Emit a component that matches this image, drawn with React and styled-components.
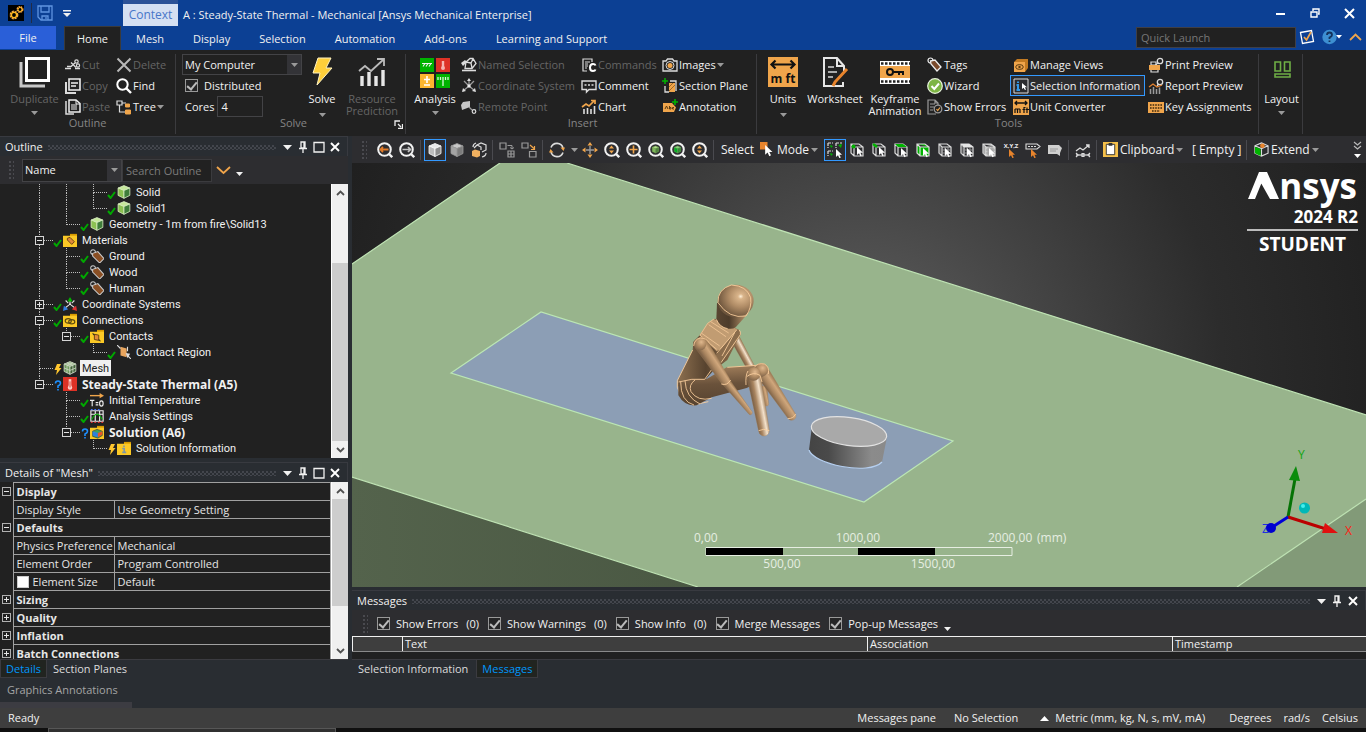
import React from "react";
import styled, { createGlobalStyle, css } from "styled-components";

const c = {
  blue: "#0c4094",
  file: "#2a5fd8",
  dark: "#212121",
  panel: "#2d2d30",
  chrome: "#292d32",
  status: "#3e3e3e",
  text: "#f1f1f1",
  dim: "#656565",
  orange: "#f0a54b",
  green: "#00b300",
  accent: "#3399ff",
};

const Global = createGlobalStyle`
  * { box-sizing: border-box; }
  html, body, #root { margin: 0; height: 100%; }
  body { background: ${c.chrome}; color: ${c.text}; font: 11px/14px "Open Sans", "Noto Sans", sans-serif; overflow: hidden; }
  button, input, select { font: inherit; color: inherit; margin: 0; }
  button { background: none; border: 0; padding: 0; }
  svg { display: block; flex: none; }
`;

/* ---------- shared ---------- */
const Svg = ({ s = 16, h = s, vb = "0 0 16 16", children }) => (
  <svg width={s} height={h} viewBox={vb} fill="none" aria-hidden="true">{children}</svg>
);
const Caret = ({ color = "#9a9a9a" }) => (
  <Svg s={7} h={4} vb="0 0 7 4"><path d="M0 0h7L3.5 4z" fill={color} /></Svg>
);
const W = "#dcdcdc";
const G = "#9a9a9a";
const O = c.orange;
const st = (color = W, w = 1.4) => ({ stroke: color, strokeWidth: w });

const CubeShape = ({ top = "#e8e8e8", left = "#bdbdbd", right = "#8e8e8e", line = "#fff" }) => (
  <g stroke={line} strokeWidth=".8" strokeLinejoin="round">
    <path d="M2 4l6-2.5L14 4 8 6.500z" fill={top} />
    <path d="M2 4l6 2.500v8L2 11.500z" fill={left} />
    <path d="M14 4L8 6.500v8l6-3z" fill={right} />
  </g>
);
const Lens = ({ children }) => (
  <>
    <circle cx="7.500" cy="7.500" r="6.300" {...st("#f2f2f2", 2)} />
    <path d="M12 12l3.200 3.200" {...st("#f2f2f2", 2.400)} />
    {children}
  </>
);
const Pointer = ({ x = 7, y = 5, fill = "#fff" }) => (
  <path transform={`translate(${x} ${y})`} d="M0 0v8l2-1.800 1.400 3 1.400-.7L3.400 5.700H6z" fill={fill} />
);
const BoxLine = ({ children, fill }) => (
  <>
    <path d="M2 2h8l4 3v9H5l-3-3zM2 2l3 3h9M5 5v9" {...st(W, 1.200)} fill={fill} />
    {children}
  </>
);
const Folder = ({ children }) => (
  <>
    <path d="M0 3h8V1h8v15H0z" fill="#fbc926" />
    <path d="M8 1h8v2H8z" fill="#d79a00" />
    {children}
  </>
);

const icons = {
  app: <><path d="M0 0h16v16H0z" fill="#000" /><circle cx="6" cy="10" r="3.400" stroke={O} strokeWidth="2" strokeDasharray="2 .7" /><circle cx="6" cy="10" r="2.600" {...st("#ffb71b", 1.400)} /><circle cx="12" cy="4.500" r="2.600" stroke={O} strokeWidth="1.800" strokeDasharray="1.500 .6" /><circle cx="12" cy="4.500" r="2" {...st("#ffb71b", 1)} /></>,
  save: <path d="M1 1h14v14H4l-3-3zM4 1v6h8V1M5 15v-4h6v4M9 12v2" {...st("#5f94e0", 1.300)} />,
  cut: <><path d="M0 11.500h6M10 11.500h5" {...st(W, 1.500)} /><path d="M2 9.500h4l4-3.500M6 5.500l5 5" {...st(W, 1.300)} /><circle cx="11.500" cy="4.500" r="1.700" {...st(W, 1.200)} /><circle cx="13" cy="8.500" r="1.600" {...st(W, 1.200)} /></>,
  copy: <><path d="M1 4v11h10" {...st(W, 2)} /><path d="M4 1h11v11H4z" fill="#212121" {...st("#eee", 1.600)} /><path d="M6 5h7M6 8h5" {...st("#eee", 1.500)} /></>,
  paste: <><path d="M1 2v13h8" {...st(W, 1.500)} /><path d="M4 1h7l4 3.500V13H4z" {...st("#eee", 1.500)} /><path d="M6 6h6M6 8h6M6 10h6M11 1v4h4" {...st("#eee", 1)} /></>,
  del: <path d="M1.500 1.500l13 13M14.500 1.500l-13 13" {...st("#b8b8b8", 2)} />,
  find: <><circle cx="6.500" cy="6.500" r="5.200" {...st("#fff", 2)} /><path d="M10 10l5 5" {...st("#fff", 2.400)} /></>,
  tree: <><path d="M1 2h5v4H1zM3.500 6v7H9M6 4h4" {...st(W, 1.200)} /><path d="M9.500 5h4v3h-4zM9.500 11h5v4h-5z" fill={O} stroke={O} /></>,
  namedSel: <><path d="M1 13.500h14" {...st(W, 1.600)} /><path d="M5 5l4-3.500h3l3 5-4 5H4zM5 5l5 1 1 5M10 6l2-4" {...st(W, 1.300)} /><path d="M0 6l4-3 2 2-4 4z" fill={W} /></>,
  coord: <><path d="M8 1v6M8 8l-6 5M8 8l6 5M3 3l4 4M13 3L9 7" {...st(G, 1.300)} /><path d="M8 0l2 3H6zM1 14l1-4 3 3zM15 14l-1-4-3 3z" fill={W} /><path d="M6.500 6.500h3v3h-3z" fill="#eee" /></>,
  remote: <><path d="M0 6l2-3 7-1v6l-8 3z" fill="#c6c6c6" /><path d="M8 8l3 3" {...st(G, 1.300)} /><circle cx="13" cy="12.500" r="1.800" {...st(W, 1.200)} /></>,
  commands: <><path d="M6 14H2V2h9v3M4 5h5M4 7h3M4 9h3M4 11h2" {...st(W, 1.200)} /><path d="M14.500 8.500Q14 7 12 7 9 7 9 10.500T12 14q2 0 2.500-1.500" {...st("#fff", 2)} /></>,
  comment: <><path d="M1 3h14v8.500H8L5.500 14v-2.500H1z" {...st(W, 1.400)} /><path d="M3.500 7h2M7 7h2M10.500 7h2" {...st(W, 1.400)} /></>,
  chart: <><path d="M1 8l4-3 3 2 5-5M10 1.500h4V5" {...st(O, 1.700)} /><path d="M3 10v5M6.500 9v6M10 10v5M13.500 7v8" {...st(W, 1.600)} /></>,
  images: <><path d="M1 4h3l1.500-2h5L12 4h3v10H1z" {...st(W, 1.300)} /><circle cx="8" cy="8.500" r="4" {...st(W, 1)} /><circle cx="8" cy="8.500" r="2.500" fill={O} /></>,
  section: <><path d="M3 0v6M0 3h6" {...st(c.green, 1.500)} /><path d="M3 8v6h4M8 3h6v10" {...st(W, 1.300)} /><path d="M7 5h6v9H7z" fill={O} /><path d="M7 9l4-4M7 13l6-6" {...st("#8a5a20", .8)} /></>,
  annot: <><path d="M1 4h9l4 4.500L12 13H1z" fill={O} /><path d="M3 10l1.500-3L6 10M7.500 7v3H9V8.500H7.500M12 8.500h-1.500V10H12" {...st("#5b3b10", 1)} /><path d="M13 0v6M10 3h6" {...st(c.green, 1.600)} /></>,
  tags: <><circle cx="3.500" cy="3.500" r="2.500" {...st("#eee", 1.200)} /><path d="M3.500 4l4.500-1 6 7-4 4-6-7z" {...st("#eee", 1.300)} fill="#7a4a2c" /></>,
  wizard: <><circle cx="8" cy="8" r="7.300" fill="#7db544" stroke="#e8f3dc" strokeWidth="1.200" /><path d="M4.500 8l2.800 3L12 5.500" {...st("#fff", 2)} /></>,
  errors: <><path d="M9 15H1V1h7l3 3v2M3 5h5M3 8h4M3 11h3M8 1v3h3" {...st(G, 1.200)} /><circle cx="11" cy="10" r="3.800" stroke={G} strokeWidth="1.300" /><path d="M9.500 10l1.200 1.500L13 8.500" {...st(O, 1.200)} /></>,
  views: <><path d="M1 5l3-3h11l-3 3zM12 5l3-3v9l-3 4z" fill="#c27a22" /><path d="M1 5h11v10H1z" fill={O} /><ellipse cx="6.500" cy="10" rx="3.800" ry="2.400" {...st("#5b3b10", 1)} /><circle cx="6.500" cy="10" r="1.200" fill="#5b3b10" /></>,
  selInfo: <><path d="M1 1h14v14H1z" {...st(W, 1)} /><path d="M5 3.500v1.600M3.500 7H5v5M3.500 12h3.500" {...st("#3399e8", 2)} /><path d="M9 5v6l1.500-1.300L12 12l1-.6-1.200-2.200H14z" fill="#fff" /></>,
  unit: <><path d="M0 0h16v16H0z" fill={O} /><path d="M2 4h12M4 2L2 4l2 2M12 2l2 2-2 2" {...st("#111", 1.300)} /><path d="M2 14v-4M4.500 14v-4M7 14v-4M2 10h5M11 14V8.500h1.500M9.500 10.500h3M14 8.500V14M13 10.500h3" {...st("#111", 1.200)} /></>,
  print: <><circle cx="12" cy="4" r="2.700" {...st(W, 1.300)} /><path d="M10 6L7.500 8" {...st(W, 1.300)} /><path d="M3 5h5v3H3zM3 12h7v3H3z" {...st(W, 1.200)} /><path d="M1 8h11v5H1z" fill={O} /></>,
  report: <><circle cx="12" cy="4" r="2.700" {...st(W, 1.300)} /><path d="M10.500 6L9 8" {...st(W, 1.300)} /><path d="M1 9l4-3 4 3 5-2" {...st("#e08030", 1.300)} /><path d="M2.500 11v5M5.500 9v7M8.500 11v5M11.500 9.500V16" {...st(G, 1.500)} /></>,
  keys: <><path d="M0 3h16v11H0z" fill={O} /><path d="M2 6h12M2 9h12M4 12h8" stroke="#3c270c" strokeWidth="1.500" strokeDasharray="1.600 1" /></>,
};
const Icon = ({ name, size = 16 }) => <Svg s={size}>{icons[name]}</Svg>;

/* ---------- title bar and ribbon tabs ---------- */
const Window = styled.div`display: flex; flex-direction: column; height: 100%; min-width: 1310px;`;
const TitleBar = styled.header`display: flex; align-items: center; height: 26px; padding-left: 8px; background: ${c.blue};`;
const QuickTools = styled.div`
  display: flex; align-items: center; width: 115px; gap: 10px; height: 22px;
  > i { width: 1px; height: 20px; margin: 0 -5px 0 -3px; background: #222b45; }
`;
const ContextTab = styled.div`width: 55px; height: 26px; border-top: 4px solid #2c5297; background: #d5e0f2; color: #4877c9; text-align: center; line-height: 22px; font-size: 12px;`;
const Title = styled.h1`margin: 3px 0 0 5px; font: inherit; flex: 1;`;
const WindowButtons = styled.div`display: flex; button { width: 34px; height: 26px; display: grid; place-items: center; }`;
const TabBar = styled.nav`display: flex; height: 24px; background: ${c.blue};`;
const Tab = styled.button`
  padding: 2px 15px 0 14px;
  ${(p) => p.$kind === "file" && css`width: 56px; height: 23px; padding: 0; background: ${c.file}; margin-right: 8px;`}
  ${(p) => p.$kind === "active" && css`width: 57px; margin-right: 1px; padding: 0; background: ${c.dark}; border: 1px solid #3a3a3a; border-bottom: 0;`}
`;
const QuickLaunch = styled.input`
  margin: 1px 3px 2px auto; width: 160px; padding: 0 4px; background: ${c.dark}; border: 1px solid #3f3f46;
  &::placeholder { color: #777; opacity: 1; }
`;
const TabTools = styled.div`display: flex; align-items: center; gap: 7px; padding: 0 4px 2px 0;`;

/* ---------- ribbon ---------- */
const Ribbon = styled.div`display: flex; height: 86px; padding: 4px 0 2px; background: ${c.dark};`;
const Group = styled.section`
  display: grid; grid-template-rows: 63px 12px; width: ${(p) => p.$w}px; border-right: 1px solid #3b3b3e; padding-left: ${(p) => p.$pad || 0}px; align-content: start;
`;
const Parts = styled.div`display: grid; grid-template-columns: ${(p) => p.$cols};`;
const Stack = styled.div`display: grid; grid-template-rows: repeat(3, 21px);`;
const GroupLabel = styled.div`
  display: grid; grid-template-columns: 1fr auto 1fr; color: #858585; line-height: 12px;
  button { justify-self: end; align-self: end; margin-right: 2px; }
`;
const Small = styled.button`
  display: flex; align-items: center; gap: 1px; height: 21px; white-space: nowrap; color: ${(p) => (p.disabled ? c.dim : c.text)};
  ${(p) => p.$on && css`border: 1px solid ${c.accent}; background: #2b2b2e; width: 135px;`}
  ${(p) => p.$inset && css`padding-left: ${p.$on ? 2 : 3}px;`}
`;
const BigBtn = styled.button`
  display: flex; flex-direction: column; align-items: center; padding: 2px 0 2px ${(p) => p.$shift || 0}px; line-height: 12px; white-space: nowrap;
  color: ${(p) => (p.disabled ? c.dim : c.text)};
  > span { margin-top: 5px; text-align: center; }
  > svg + span + svg { margin-top: auto; }
`;
const Picker = styled.div`
  display: flex; align-items: center; background: ${c.dark}; border: 1px solid #434346; height: ${(p) => p.$h || 21}px; width: ${(p) => p.$w}px;
  select { appearance: none; flex: 1; min-width: 0; background: none; border: 0; padding: 0 2px; height: 100%; outline: 0; }
  > span { width: 14px; height: 100%; display: grid; place-items: center; background: #333337; }
`;
const CheckLabel = styled.label`display: flex; align-items: center; gap: 6px; padding-left: ${(p) => p.$inset || 0}px; white-space: nowrap;`;
const Check = styled.input.attrs({ type: "checkbox", defaultChecked: true })`
  appearance: none; width: 13px; height: 13px; border: 1px solid #999; background: #252526; display: grid; place-items: center;
  &:checked::before { content: ""; width: 4px; height: 8px; border: solid #bbb; border-width: 0 2px 2px 0; transform: rotate(40deg); margin-top: -2px; }
`;
const CoresLabel = styled.label`
  display: flex; align-items: center; padding-left: 3px;
  input { margin-left: 3px; width: 46px; height: 21px; background: ${c.dark}; border: 1px solid #434346; padding: 0 3px; }
`;

const S = ({ icon, children, ...p }) => <Small {...p}><Icon name={icon} /><span>{children}</span>{p.$caret && <Caret />}</Small>;
const Big = ({ icon, lines, caret, ...p }) => (
  <BigBtn {...p}>
    <Svg s={32} vb="0 0 32 32">{icon}</Svg>
    <span>{lines.map((l) => <React.Fragment key={l}>{l}<br /></React.Fragment>)}</span>
    {caret && <Caret />}
  </BigBtn>
);

const bigIcons = {
  duplicate: <><path d="M2 6v24h24" {...st("#c8c8c8", 3)} /><path d="M7.500 2.500h22v22h-22z" {...st("#fff", 3)} /></>,
  solve: <path d="M12 2h13l-5 10h6L11 29l3-12H7z" fill="#ffcf3a" stroke="#fff2c0" strokeWidth="1" />,
  resource: <><path d="M3 15l6-5 6 5L27 4M21 3h7v7" {...st("#bbb", 1.800)} /><path d="M6 20v10M13 16v14M20 20v10M27 14v16" {...st("#e6e6e6", 3.400)} /></>,
  analysis: <>
    <path d="M1 2h14v14H1z" fill={c.green} /><path d="M17 2h14v14H17z" fill="#de3226" /><path d="M1 18h14v14H1z" fill="#fbb62f" /><path d="M17 18h14v14H17z" fill={c.green} />
    <path d="M3 7.500h10M4 10.500l2-3M7 10.500l2-3M10 10.500l2-3" {...st("#eee", 1.100)} /><path d="M24 5v6" {...st("#f5b5b0", 2.400)} /><circle cx="24" cy="12" r="2" fill="#f5b5b0" />
    <path d="M8 20v7M5 23.500h6M5 29h6" {...st("#fff", 1.600)} /><path d="M19 21v3M21.500 21v3M24 21v9M26.500 21v3M29 21v3" {...st("#d8f5d8", 1.300)} />
  </>,
  units: <><path d="M1 1h30v30H1z" fill="#f0a54b" /><path d="M5 8.500h22M8.500 4.500l-4 4 4 4M23.500 4.500l4 4-4 4" {...st("#111", 2.200)} />
    <text x="16" y="27" textAnchor="middle" fontSize="12" fontWeight="700" fontFamily="Open Sans, sans-serif" fill="#111">m ft</text></>,
  worksheet: <><path d="M25 15v-5l-7-8H5v28h19v-4M18 2v8h7" {...st("#e6e6e6", 2)} /><path d="M9 11h6M9 16h9M9 21h5" {...st("#aaa", 2)} /><path d="M28 13l-12 13-2 4" {...st("#e8842c", 3)} /></>,
  keyframe: <><path d="M1 5h30v23H1z" fill="#fff" /><path d="M1 10h30v12H1z" fill="#f0a54b" /><path d="M2 7.500h29M2 25.500h29" stroke="#222" strokeWidth="2.600" strokeDasharray="2.500 1.500" /><circle cx="11" cy="16" r="3" {...st("#111", 2)} /><path d="M14 16h11M20 16v3M24 16v3" {...st("#111", 2)} /></>,
  layout: <path d="M9 6h5.500v9H9zM18.500 6H24v9h-5.500zM9 18h15v3H9z" {...st("#6fae45", 1.600)} />,
};

function RibbonBar() {
  return (
    <Ribbon>
      <Group $w={176}>
        <Parts $cols="65px 51px 1fr">
          <Big disabled $shift={4} icon={bigIcons.duplicate} lines={["Duplicate"]} caret />
          <Stack><S disabled icon="cut">Cut</S><S disabled icon="copy">Copy</S><S disabled icon="paste">Paste</S></Stack>
          <Stack><S disabled icon="del">Delete</S><S icon="find">Find</S><S icon="tree" $caret>Tree</S></Stack>
        </Parts>
        <GroupLabel><span /><span>Outline</span></GroupLabel>
      </Group>
      <Group $w={230} $pad={6}>
        <Parts $cols="120px 40px 60px">
          <Stack>
            <Picker $w={120}><select aria-label="Solve on" defaultValue="My Computer"><option>My Computer</option></select><span><Caret /></span></Picker>
            <CheckLabel $inset={3}><Check /> Distributed</CheckLabel>
            <CoresLabel>Cores<input defaultValue="4" /></CoresLabel>
          </Stack>
          <Big icon={bigIcons.solve} lines={["Solve"]} caret />
          <Big disabled icon={bigIcons.resource} lines={["Resource", "Prediction"]} />
        </Parts>
        <GroupLabel><span /><span>Solve</span><button aria-label="Solve options"><Svg s={9} vb="0 0 9 9"><path d="M1 6V1h5M4 4l3 3M8.500 4v4.500H4" {...st("#eee", 1.300)} /></Svg></button></GroupLabel>
      </Group>
      <Group $w={351} $pad={3}>
        <Parts $cols="52px 120px 81px 1fr">
          <Big icon={bigIcons.analysis} lines={["Analysis"]} caret />
          <Stack><S disabled icon="namedSel">Named Selection</S><S disabled icon="coord">Coordinate System</S><S disabled icon="remote">Remote Point</S></Stack>
          <Stack><S disabled icon="commands">Commands</S><S icon="comment">Comment</S><S icon="chart">Chart</S></Stack>
          <Stack><S icon="images" $caret>Images</S><S icon="section">Section Plane</S><S icon="annot">Annotation</S></Stack>
        </Parts>
        <GroupLabel><span /><span>Insert</span></GroupLabel>
      </Group>
      <Group $w={502} $pad={2}>
        <Parts $cols="48px 56px 64px 83px 138px 1fr">
          <Big icon={bigIcons.units} lines={["Units"]} caret />
          <Big icon={bigIcons.worksheet} lines={["Worksheet"]} />
          <Big icon={bigIcons.keyframe} lines={["Keyframe", "Animation"]} />
          <Stack><S icon="tags">Tags</S><S icon="wizard">Wizard</S><S icon="errors">Show Errors</S></Stack>
          <Stack><S $inset icon="views">Manage Views</S><S $inset $on icon="selInfo">Selection Information</S><S $inset icon="unit">Unit Converter</S></Stack>
          <Stack><S icon="print">Print Preview</S><S icon="report">Report Preview</S><S icon="keys">Key Assignments</S></Stack>
        </Parts>
        <GroupLabel><span /><span>Tools</span></GroupLabel>
      </Group>
      <Group $w={44} $pad={2}>
        <Parts $cols="1fr"><Big icon={bigIcons.layout} lines={["Layout"]} caret /></Parts>
      </Group>
    </Ribbon>
  );
}

/* ---------- dock panels ---------- */
const Body = styled.main`display: flex; flex: 1; min-height: 0; gap: 4px; background: ${c.chrome};`;
const Left = styled.div`width: 348px; flex: none; display: flex; flex-direction: column; min-height: 0;`;
const Right = styled.div`flex: 1; min-width: 0; display: flex; flex-direction: column; min-height: 0;`;
const Panel = styled.section`
  display: flex; flex-direction: column; min-height: 0; flex: ${(p) => p.$flex || "none"};
  margin: ${(p) => p.$above || 0}px 0 ${(p) => p.$below || 0}px;
`;
const PanelHead = styled.header`
  display: flex; align-items: center; gap: 5px; flex: none; height: 20px; padding: 1px 6px 0 5px; background: ${c.chrome}; border: 1px solid #383a40; border-width: 1px 1px 0 0;
  h2 { font: inherit; margin: 0; }
  > i { flex: 1; height: 5px; background: radial-gradient(circle at 1px 1px, #43464d 1px, transparent 1px) 0 0 / 4px 4px, radial-gradient(circle at 1px 1px, #43464d 1px, transparent 1px) 2px 2px / 4px 4px; }
  button { display: grid; place-items: center; width: 12px; height: 14px; }
  div { display: flex; gap: 4px; }
`;
const Grip = styled.i`width: 5px; height: 18px; background: radial-gradient(circle at 1px 1px, #4a4a4f 1px, transparent 1px) 0 0 / 4px 4px;`;
const OutlineBar = styled.div`
  display: flex; align-items: center; flex: none; height: 28px; padding-left: 9px; background: ${c.panel};
  ${Grip} { margin-right: 8px; }
  input { width: 90px; height: 23px; margin: 0 4px 0 0; padding: 0 3px; background: ${c.dark}; border: 1px solid #3b3b3e; }
  input::placeholder { color: #7b7b7b; opacity: 1; }
  > button:last-child { margin: 8px 0 0 5px; }
`;
const Split = styled.div`display: flex; flex: ${(p) => p.$flex || 1}; min-height: 0; background: ${c.dark};`;

const PanelHeader = ({ title, max }) => (
  <PanelHead>
    <h2>{title}</h2><i />
    <div>
      <button aria-label="Window position"><Svg s={9} h={5} vb="0 0 9 5"><path d="M0 0h9L4.500 5z" fill="#f1f1f1" /></Svg></button>
      <button aria-label="Auto hide"><Svg s={10} h={12} vb="0 0 10 12"><path d="M3 1h4v6H3zM6 1v6M1 7.500h8M5 8v4" {...st("#f1f1f1", 1.300)} /></Svg></button>
      {max && <button aria-label="Maximize"><Svg s={12} vb="0 0 12 12"><path d="M1 1.500h10v9.500H1z" {...st("#f1f1f1", 1.300)} /></Svg></button>}
      <button aria-label="Close"><Svg s={10} vb="0 0 10 10"><path d="M1 1l8 8M9 1L1 9" {...st("#fff", 1.900)} /></Svg></button>
    </div>
  </PanelHead>
);

const ScrollTrack = styled.div`
  width: 17px; flex: none; background: #f0f0f0; display: flex; flex-direction: column; border-left: 1px solid #fff;
  button { height: 17px; display: grid; place-items: center; flex: none; }
  > div { flex: ${(p) => p.$thumb}; background: #cdcdcd; }
  > i { flex: ${(p) => p.$before}; }
  > b { flex: ${(p) => p.$after}; }
`;
const Scroll = (p) => (
  <ScrollTrack {...p}>
    <button aria-label="Scroll up"><Svg s={9} h={6} vb="0 0 9 6"><path d="M1 5l3.500-3.500L8 5" {...st("#505050", 1.800)} /></Svg></button>
    <i /><div /><b />
    <button aria-label="Scroll down"><Svg s={9} h={6} vb="0 0 9 6"><path d="M1 1l3.500 3.500L8 1" {...st("#505050", 1.800)} /></Svg></button>
  </ScrollTrack>
);

/* ---------- outline tree ---------- */
const Tree = styled.ul`list-style: none; margin: 0; padding: 0 0 0 26px; flex: 1; overflow: hidden; font-family: Roboto, sans-serif;`;
const TreeRow = styled.li`display: flex; align-items: center; height: 16px; white-space: nowrap;`;
const Guide = styled.span`
  display: grid; grid-template: 9px 7px / 13px 14px; width: 27px; height: 16px; flex: none;
  > i { grid-column: 2; border: 0 dotted #bdbdbd; }
  > i:nth-of-type(1) { grid-row: 1; border-left-width: ${(p) => (p.$k === "b" ? 0 : 1)}px; border-bottom-width: ${(p) => (p.$k === "t" || p.$k === "l" ? 1 : 0)}px; }
  > i:nth-of-type(2) { grid-row: 2; border-left-width: ${(p) => (p.$k === "v" || p.$k === "t" ? 1 : 0)}px; }
  > button { grid-area: 1 / 1 / -1 / -1; width: 9px; height: 9px; margin: 4px 0 0 9px; border: 1px solid #d5d5d5; background: ${c.dark}; display: grid; place-items: center; }
`;
const TreeText = styled.span`
  padding: 1px 2px 0; margin-left: 3px; line-height: 15px;
  ${(p) => p.$bold && css`font: 700 12px/15px "Open Sans", sans-serif;`}
  ${(p) => p.$sel && css`background: #f0f0f0; color: #222;`}
`;
const PlusMinus = ({ open }) => <Svg s={7} vb="0 0 7 7"><path d={open ? "M1 3.500h5" : "M1 3.500h5M3.500 1v5"} stroke="#e5e5e5" /></Svg>;

const statusIcons = {
  ok: <path d="M1 8l2.500 3L8 5" {...st("#00a800", 2)} />,
  bolt: <path d="M4 1h4L6 5h2.500L3 12l1-5H1.500z" fill="#ffc62e" />,
  q: <path d="M2.500 4.500Q2.500 2 5 2t2.500 2.300Q7.500 6 5 7v2M5 10v1.500" {...st("#1e90ff", 1.600)} />,
};
const nodeIcons = {
  solid: <g transform="translate(-1 -1) scale(1.120)"><CubeShape top="#c5e89a" left="#8cc152" right="#3f7d3a" line="#dff2c8" /></g>,
  materials: <Folder><path d="M5 6l3-1 5 5-3 3-5-5z" fill="#e08a3a" stroke="#5a3a10" /></Folder>,
  material: <><circle cx="3.500" cy="3.500" r="2.700" {...st("#ccc", 1.200)} /><path d="M3 5l6-2 7 8-5 5-8-8z" fill="#8a4f24" {...st("#ccc", 1.200)} /></>,
  csys: <><path d="M8 2v5M3 12l4-3M13 12L9 9M3 4l3 3M13 4l-3 3" {...st("#ddd", 1.300)} /><path d="M8 0l3 5H5z" fill="#00b300" /><path d="M0 16l1-6 5 4z" fill="#2f7fe0" /><path d="M16 16l-1-6-5 4z" fill="#e03030" /><path d="M7 7h2v2H7z" fill="#fff" /></>,
  connections: <Folder><ellipse cx="6" cy="9" rx="3.500" ry="2.500" {...st("#5a4a10", 1.300)} /><ellipse cx="10" cy="10" rx="3.500" ry="2.500" {...st("#5a4a10", 1.300)} /></Folder>,
  contacts: <Folder><path d="M5 6l5 1v6l-5-1z" fill="#e08a3a" stroke="#5a3a10" /><path d="M3 5l2 2M12 14l-2-2" {...st("#222", 1.200)} /></Folder>,
  region: <><path d="M4 2l7 2v10l-7-2z" fill="#e8a55e" /><path d="M0 0l4 4M16 16l-5-5M12 2v5" {...st("#ddd", 1.300)} /><path d="M10 9l5 1-3 5z" fill="#ddd" /></>,
  mesh: <g transform="translate(-1 -1) scale(1.120)"><CubeShape top="#9bb98a" left="#6f9a5c" right="#42633a" line="#d2dccb" /><path d="M5 2.800l6 2.500v8M11 2.800L5 5.300v8M2 8l6 2.500L14 8" {...st("#d2dccb", .8)} /></g>,
  thermal: <><path d="M0 0h16v16H0z" fill="#de3226" /><path d="M8 2.500v8" {...st("#ffd0cc", 3)} /><circle cx="8" cy="12" r="2.500" fill="#ffd0cc" /><path d="M8 5v7" {...st("#de3226", 1)} /></>,
  initial: <><path d="M0 3h12" {...st(O, 1.600)} /><path d="M11 0l5 3-5 3z" fill={O} /><path d="M0 8.500h5M2.500 8.500V15M6.500 11h3M6.500 13.500h3" {...st("#eee", 1.300)} /><ellipse cx="13" cy="12" rx="2" ry="3" {...st("#eee", 1.300)} /></>,
  settings: <><path d="M1 2h14v12H1zM6 2v12M11 2v12M1 6h14" {...st("#eee", 1.300)} /><path d="M2 12Q8 0 14 12" {...st("#00b300", 1.400)} /><path d="M1 .8h12" stroke="#4070ff" strokeWidth="1.500" strokeDasharray="2 2" /><path d="M1 15.300h14" stroke="#e03030" strokeWidth="1.400" strokeDasharray="2 2" /></>,
  solution: <Folder><path d="M3 7l5-2 6 2v5l-5 3-6-2z" fill="#3da35d" stroke="#333" strokeWidth=".7" /><path d="M3 7l6 2v5l-6-2z" fill="#2f7fe0" /><path d="M9 9l5-2v4l-5 3z" fill="#e8552a" /></Folder>,
  info: <Folder><path d="M8 5v1.800M6 8.500h2.200V13M6 13h4.500" {...st("#7d96a8", 1.800)} /></Folder>,
};
const treeRows = [
  ["vvt", "ok", "solid", "Solid"],
  ["vvl", "ok", "solid", "Solid1"],
  ["vl", "ok", "solid", "Geometry - 1m from fire\\Solid13"],
  ["t", "ok", "materials", "Materials", "-"],
  ["vt", "ok", "material", "Ground"],
  ["vt", "ok", "material", "Wood"],
  ["vl", "ok", "material", "Human"],
  ["t", "ok", "csys", "Coordinate Systems", "+"],
  ["t", "ok", "connections", "Connections", "-"],
  ["vl", "ok", "contacts", "Contacts", "-"],
  ["vbl", "ok", "region", "Contact Region"],
  ["t", "bolt", "mesh", "Mesh", "", "sel"],
  ["l", "q", "thermal", "Steady-State Thermal (A5)", "-", "bold"],
  ["bt", "ok", "initial", "Initial Temperature"],
  ["bt", "ok", "settings", "Analysis Settings"],
  ["bl", "q", "solution", "Solution (A6)", "-", "bold"],
  ["bbl", "bolt", "info", "Solution Information"],
];

/* ---------- details ---------- */
const DetailsTable = styled.table`
  border-collapse: collapse; table-layout: fixed; width: 100%;
  td, th { height: 18px; padding: 0 0 0 3px; border: 1px solid #a0a0a0; text-align: left; white-space: nowrap; font-weight: 400; line-height: 14px; color: #e6e6e6; }
  th[colspan] { font-weight: 700; }
  td:first-child { border-left: 0; border-top: 0; border-bottom: 0; padding: 0 0 0 2px; }
  td button { display: grid; place-items: center; width: 9px; height: 9px; border: 1px solid #b0b0b0; }
  label { display: flex; align-items: center; gap: 4px; }
`;
const PlainCheck = styled.input.attrs({ type: "checkbox" })`appearance: none; width: 12px; height: 12px; background: #fff; border: 1px solid #ccc;`;
const Clip = styled.div`flex: 1; min-width: 0; overflow: hidden;`;
const detailRows = [
  ["-", "Display"], ["", "Display Style", "Use Geometry Setting"], ["-", "Defaults"],
  ["", "Physics Preference", "Mechanical"], ["", "Element Order", "Program Controlled"], ["", "Element Size", "Default"],
  ["+", "Sizing"], ["+", "Quality"], ["+", "Inflation"], ["+", "Batch Connections"],
];
const DockTabs = styled.div`display: flex; height: 19px; flex: none; border-top: 1px solid #3b3b40;`;
const DockTab = styled.button`
  padding: 0 8px 0 6px; color: #dcdcdc; white-space: nowrap;
  ${(p) => p.$on && css`padding: 0 5px; color: #0097fb; background: #212420; border: solid #3b3b40; border-width: 0 1px 1px;`}
`;
const Annotations = styled.div`height: 30px; flex: none; button { display: block; height: 24px; padding: 0 7px; color: #a5a5a5; } i { display: block; width: 132px; height: 6px; background: #3c3c42; }`;

/* ---------- view toolbar ---------- */
const ViewBar = styled.div`display: flex; align-items: center; flex: none; height: 27px; background: ${c.panel}; padding-left: 10px; font-size: 12px; white-space: nowrap; overflow: hidden; ${Grip} { margin-right: 7px; }`;
const Tool = styled.button`width: 22px; height: 22px; flex: none; display: grid; place-items: center; ${(p) => p.$on && css`border: 1px solid ${c.accent};`}`;
const Bar = styled.i`width: 1px; height: 20px; margin: 0 3px 0 2px; background: #4a4a4f; flex: none;`;
const TextTool = styled.button`display: flex; align-items: center; gap: 2px; width: ${(p) => p.$w}px; flex: none; padding-left: ${(p) => p.$pad || 0}px;`;
const Overflow = styled.button`margin: 0 4px 0 auto;`;

const zoomArrows = <path d="M7.500 3.500L10 6.500H5zM7.500 11.500L5 8.500h5z" fill={O} />;
const meshBox = <path d="M5 8h9M5 11h9M8 5v9M11 5v9M3 3v9" {...st("#a0a0a0", .9)} />;
const tools1 = [
  [<Lens key="a"><path d="M3.500 7.500h8M6 5L3.500 7.500 6 10" {...st("#e07a28", 1.800)} /></Lens>, "Previous view"],
  [<Lens key="a"><path d="M3.500 7.500h8M9 5l2.500 2.500L9 10" {...st("#c5c5c5", 1.700)} /></Lens>, "Next view"],
  "|",
  [<CubeShape key="a" />, "Shaded exterior and edges", true],
  [<CubeShape key="a" top="#c8c8c8" left="#a4a4a4" right="#7c7c7c" line="#9a9a9a" />, "Shaded exterior"],
  [<g key="a"><path d="M6 3l4-2 5 2v5l-4 2M3 6l3-3 4 2v3" {...st(W, 1.200)} /><path d="M1 9l3-1.500L9 9v5l-3 1.500L1 14z" fill="#f0b060" /><path d="M11 15q4-1 4-4M2 5q0-3 3-4" {...st(W, 1.200)} /></g>, "Wireframe"],
  "|",
  [<g key="a"><path d="M1 1h6v6H1zM9 9h6v6H9zM12 9v6M9 12h6" {...st(G, 1.200)} /><path d="M8.500 3.500h4.500V7M11 5.500L13 7l2-1.500" {...st(G, 1)} /></g>, "Show mesh"],
  [<g key="a"><path d="M1 1h6v5H1zM8.500 9.500H15V15H8.500z" {...st(G, 1.200)} /><path d="M9 3l4.500 4M13.500 4v3.500H10" {...st(O, 1.200)} /></g>, "Random colors"],
  "|",
  [<g key="a"><path d="M2 5.500A6.300 6.300 0 0 1 14 6M14 10.500A6.300 6.300 0 0 1 2 10" {...st(W, 1.600)} /><path d="M11.500 5.500H16L14.500 9zM4.500 10.500H0L1.500 7z" fill={O} /></g>, "Rotate"],
  "v",
  [<g key="a"><path d="M8 4v8M4 8h8" {...st(G, 1.400)} /><path d="M8 0l2.500 3.500h-5zM8 16l2.500-3.500h-5zM0 8l3.500-2.500v5zM16 8l-3.500-2.500v5z" fill={O} /></g>, "Pan"],
  [<Lens key="a">{zoomArrows}</Lens>, "Zoom"],
  [<Lens key="a"><path d="M7.500 3.500v8M3.500 7.500h8" {...st(O, 1.600)} /></Lens>, "Box zoom"],
  [<Lens key="a"><g transform="translate(3.200 3.200) scale(.54)"><CubeShape top="#b4dc8c" left="#7fb65a" right="#4f8340" line="#7fb65a" /></g></Lens>, "Fit"],
  [<Lens key="a"><g transform="translate(3.200 3.200) scale(.54)"><CubeShape top="#8fd07f" left="#00b320" right="#3a8a3a" line="#6fb060" /></g></Lens>, "Zoom to selection"],
  [<Lens key="a">{zoomArrows}</Lens>, "Magnifier"],
  "|",
];
const tools2 = [
  [<g key="a"><path d="M1 1h5M1 1v5M9 1h6M9 1v5M1 9h5M1 9v5" {...st(W, 1.200)} strokeDasharray="3 1" /><path d="M3 3l3 1-2 2zM11 3l4-1-1 4zM3 11l3 1-2 2z" fill={c.green} /><Pointer x={9} y={7} /></g>, "Smart select", true],
  [<BoxLine key="a"><circle cx="4.500" cy="4.500" r="2" fill={c.green} /><Pointer x={8} y={5} /></BoxLine>, "Vertex"],
  [<BoxLine key="a"><path d="M2 2l4 3" {...st(c.green, 2.600)} /><Pointer x={8} y={5} /></BoxLine>, "Edge"],
  [<BoxLine key="a"><path d="M2 2h8l4 3H5z" fill={c.green} /><Pointer x={8} y={6} /></BoxLine>, "Face"],
  [<BoxLine key="a" fill="#00b300"><Pointer x={8} y={6} /></BoxLine>, "Body"],
  [<BoxLine key="a">{meshBox}<Pointer x={8} y={6} /></BoxLine>, "Node"],
  [<BoxLine key="a"><path d="M2 2h8l4 3H5z" fill="#e5e5e5" />{meshBox}<Pointer x={8} y={6} /></BoxLine>, "Element face"],
  [<BoxLine key="a" fill="#b5b5b5">{meshBox}<Pointer x={8} y={6} /></BoxLine>, "Element"],
  [<g key="a"><text x="8" y="6" textAnchor="middle" fontSize="6" fontWeight="700" fontFamily="Open Sans, sans-serif" fill="#eee">X,Y,Z</text><Pointer x={6} y={7} fill="#e8842c" /></g>, "Coordinates"],
  [<g key="a"><path d="M1 2h11l3 2.500L12 7H1z" {...st(W, 1.100)} /><path d="M3 4.500h8" stroke={W} strokeDasharray="2 1" /><Pointer x={6} y={7} fill="#e8842c" /></g>, "Probe label"],
  [<g key="a"><path d="M1 3h11l3 3-2 5v3l-3-2H1z" fill="#cfcfcf" /><path d="M3 7h8M3 9h6" {...st("#9a9a9a", 1)} /></g>, "Annotation label"],
  "|",
  [<g key="a"><path d="M1 9l4-3 3 2 6-5M11 3h3v3" {...st(W, 1.300)} /><path d="M1 13h14" {...st(W, 1.300)} /><path d="M1 11l2 2-2 2M7 11.500h2v3H7zM15 11l-2 2 2 2" {...st(W, 1.200)} /></g>, "Measure"],
  "|",
];
const renderTools = (list) => list.map((t, i) => {
  if (t === "|") return <Bar key={i} />;
  if (t === "v") return <TextTool key={i} $w={11} $pad={3} aria-label="Rotate options"><Caret /></TextTool>;
  return <Tool key={i} $on={t[2]} aria-label={t[1]}><Svg>{t[0]}</Svg></Tool>;
});

/* ---------- 3D scene ---------- */
const Viewport = styled.div`position: relative; flex: 1; min-height: 0; overflow: hidden; > svg { width: 100%; height: 100%; }`;
const Brand = styled.div`
  position: absolute; top: 9px; right: 8px; width: 111px; color: #fff; text-align: right;
  svg { overflow: visible; }
  p { margin: 0; font-size: 17px; line-height: 18px; font-weight: 700; padding-bottom: 3px; border-bottom: 2px solid #bdbdbd; }
  strong { display: block; text-align: center; font-size: 19px; line-height: 26px; }
`;

const Limb = ({ id, from: [x1, y1, r1], to: [x2, y2, r2], shine = "#d0a77c" }) => {
  const len = Math.hypot(x2 - x1, y2 - y1);
  const nx = -(y2 - y1) / len;
  const ny = (x2 - x1) / len;
  const d = `M${x1 + nx * r1} ${y1 + ny * r1}A${r1} ${r1} 0 0 1 ${x1 - nx * r1} ${y1 - ny * r1}L${x2 - nx * r2} ${y2 - ny * r2}A${r2} ${r2} 0 0 1 ${x2 + nx * r2} ${y2 + ny * r2}z`;
  return (
    <>
      <linearGradient id={id} gradientUnits="userSpaceOnUse" x1={x1 + nx * r1} y1={y1 + ny * r1} x2={x1 - nx * r1} y2={y1 - ny * r1}>
        <stop offset="0" stopColor="#6f5740" /><stop offset=".35" stopColor="#a8845f" /><stop offset=".7" stopColor={shine} /><stop offset="1" stopColor="#94734f" />
      </linearGradient>
      <path d={d} fill={`url(#${id})`} stroke="#a37f58" strokeWidth="1" />
    </>
  );
};
const edge = { stroke: "#ffd2a0", strokeWidth: 2.5, fill: "none" };

const Scene = () => (
  <svg viewBox="352 163 1014 424" preserveAspectRatio="xMidYMid slice" role="img" aria-label="Seated figure beside a fire pit">
    <defs>
      <radialGradient id="bg" gradientUnits="userSpaceOnUse" cx="859" cy="375" r="560">
        <stop offset="0" stopColor="#626262" /><stop offset=".3" stopColor="#484848" /><stop offset=".65" stopColor="#2c2c2c" /><stop offset="1" stopColor="#1f1f1f" />
      </radialGradient>
      <linearGradient id="side" x1="0" x2="1"><stop offset="0" stopColor="#444" /><stop offset=".25" stopColor="#4a4a4a" /><stop offset=".8" stopColor="#8b8b8b" /><stop offset="1" stopColor="#8a8a8a" /></linearGradient>
      <radialGradient id="head" cx=".64" cy=".36" r=".65"><stop offset="0" stopColor="#fff0d8" /><stop offset=".12" stopColor="#d9b48a" /><stop offset=".5" stopColor="#b08c66" /><stop offset="1" stopColor="#6b533b" /></radialGradient>
      <radialGradient id="joint" cx=".6" cy=".35" r=".7"><stop offset="0" stopColor="#e0b88e" /><stop offset=".5" stopColor="#b28c64" /><stop offset="1" stopColor="#7c6147" /></radialGradient>
      <linearGradient id="torso" x1="0" x2="1"><stop offset="0" stopColor="#8d7050" /><stop offset=".45" stopColor="#57432f" /><stop offset="1" stopColor="#94734f" /></linearGradient>
      <linearGradient id="thigh" x1="0" y1="0" x2=".1" y2="1"><stop offset="0" stopColor="#a8845f" /><stop offset=".5" stopColor="#6a523b" /><stop offset="1" stopColor="#574330" /></linearGradient>
      <linearGradient id="neck" x1="0" x2="1"><stop offset="0" stopColor="#5a4632" /><stop offset=".4" stopColor="#4c3b2a" /><stop offset="1" stopColor="#c09a70" /></linearGradient>
      <linearGradient id="slabSide" x1="0" x2="1"><stop offset="0" stopColor="#54634c" /><stop offset="1" stopColor="#4a5843" /></linearGradient>
    </defs>
    <path d="M352 163h1014v424H352z" fill="url(#bg)" />
    <path d="M352 477L698 587H352z" fill="url(#slabSide)" />
    <path d="M1366 499v88h-129z" fill="#829a78" />
    <path d="M352 264L500 163h67l799 252v84l-129 88H698L352 477z" fill="#98b48c" />
    <path d="M352 264L500 163M567 163l799 252M352 477l346 110M1366 499l-129 88" fill="none" stroke="#bfe3b4" strokeWidth="1.200" />
    <path d="M451 373l90-61 412 129-89 61z" fill="#8c9eb5" stroke="#bbe6b4" strokeWidth="1.200" />

    <path d="M812 426l-3 24c4 14 60 26 73 12l5-25z" fill="url(#side)" />
    <path d="M809 450c4 14 60 26 73 12" fill="none" stroke="#b5cff0" strokeWidth="1.200" />
    <ellipse cx="849" cy="431.500" rx="38" ry="14" transform="rotate(8 849 431.500)" fill="#a9a9a9" stroke="#e2e2e2" strokeWidth="1.200" />

    <g transform="translate(640 270) scale(.33333)" strokeLinejoin="round">
      <Limb id="armFar" from={[285, 205, 14]} to={[342, 310, 12]} shine="#f4e2cc" />
      <Limb id="handFar" from={[370, 360, 12]} to={[380, 402, 6]} />
      <path d="M225 146L298 180 302 192 262 270 222 300 195 330 112 350 114 328 158 240 160 215 180 195 205 160z" fill="url(#torso)" />
      <path d="M222 147L292 178 246 234 230 244 178 196 203 160z" fill="#c19c72" />
      <path d="M290 180q14 0 11 16L244 276q-20 4-16-22z" fill="#8a6c4c" />
      <path d="M222 147l-19 13-23 36 50 42M212 155l54 34M206 164l52 36M185 190l54 38" {...edge} strokeWidth="2" />
      <path d="M290 180L230 250M298 180q5 6 3 14l-58 84M284 188l-38 70" {...edge} />
      <path d="M158 240L112 332v20l14 34 34 19 45-10" {...edge} />
      <path d="M115 335q35 -12 85 -8l60-35 90-6 34 16-14 28-50 24-105 28-45 24q-36 4-55-30z" fill="url(#thigh)" />
      <path d="M262 292l88-6M122 335q0 60 40 70M135 332q2 50 45 70M165 330q-20 15-12 35 20 30 62 20M116 336q40-12 78-8l20-28" {...edge} />
      <Limb id="forearm" from={[256, 333, 13]} to={[331, 428, 6]} />
      <Limb id="upperArm" from={[184, 223, 21]} to={[256, 332, 14]} />
      <circle cx="180" cy="222" r="19" fill="url(#joint)" />
      <path d="M161 228q2-20 20-24 18 0 26 14M244 342q18 6 28-12" {...edge} />
      <Limb id="shinFar" from={[364, 302, 21]} to={[455, 438, 13]} />
      <circle cx="364" cy="300" r="20" fill="url(#joint)" />
      <path d="M343 292q10-14 30-10 16 8 12 30M443 446q18 0 24-14" {...edge} />
      <Limb id="shinNear" from={[341, 315, 21]} to={[372, 482, 16]} shine="#f4e2cc" />
      <circle cx="341" cy="312" r="20" fill="url(#joint)" />
      <path d="M318 345q-2-30 6-42M320 320q20-16 40-4l6 20M356 482q14-8 32 0" {...edge} />
      <path d="M231 98L229 148q10 24 34 28 16 2 24-4l38-42z" fill="url(#neck)" />
      <ellipse cx="287" cy="93" rx="54" ry="49" fill="url(#head)" />
      <path d="M234 98q34 50 84 40M234 98q-2-40 40-53 46 2 58 38 4 30-14 55M229 148q10 24 34 28" {...edge} />
    </g>

    <g fontFamily="Open Sans, sans-serif" fontSize="12" fill="#e6eee2">
      <text x="694" y="542">0,00</text><text x="858" y="542" textAnchor="middle">1000,00</text><text x="988" y="542">2000,00</text><text x="1037" y="542">(mm)</text>
      <text x="782" y="568" textAnchor="middle">500,00</text><text x="933" y="568" textAnchor="middle">1500,00</text>
      <text x="1298" y="459" fill="#12a512">Y</text><text x="1345" y="535" fill="#ff1e14">X</text><text x="1262" y="533" fill="#2030e0">Z</text>
    </g>
    <path d="M706 547.500h306v8H706z" fill="none" stroke="#e6eee2" />
    <path d="M706 548h77v7h-77zM858 548h77v7h-77z" fill="#000" />
    <path d="M1288 517l7-38" stroke="#067306" strokeWidth="3" /><path d="M1296 466l4 15-11-1z" fill="#0a8c0a" />
    <path d="M1288 517l38 12" stroke="#b00" strokeWidth="3" /><path d="M1338 533l-13-10-3 10z" fill="#e01010" />
    <path d="M1288 517l-14 9" stroke="#0000d8" strokeWidth="3" /><circle cx="1271" cy="528" r="5" fill="#0000d0" />
    <circle cx="1304.500" cy="508" r="5.500" fill="#00b8b8" /><circle cx="1303" cy="506" r="2" fill="#4ee" />
  </svg>
);

/* ---------- messages ---------- */
const MsgBar = styled.div`
  display: flex; align-items: center; height: 26px; padding: 1px 0 0 11px; background: ${c.panel};
  ${Grip} { margin-right: 9px; }
  label { margin-right: 9px; }
  label span { padding-left: 2px; }
  > button { margin: 10px 0 0 -3px; }
`;
const MsgTable = styled.table`
  width: 100%; border-collapse: collapse; table-layout: fixed; background: ${c.status};
  th { height: 15px; padding: 0 0 0 2px; font-weight: 400; text-align: left; line-height: 12px; border: solid #f0f0f0; border-width: 1px 0 0 1px; border-bottom: 1px solid #8a8a8a; }
`;
const MsgBody = styled.div`height: 23px; background: ${c.dark};`;
const Footroom = styled.div`height: 30px; flex: none;`;
const Status = styled.footer`
  display: flex; align-items: center; gap: 18px; flex: none; height: 20px; padding: 0 8px; background: ${c.status}; white-space: nowrap;
  > span:first-child { flex: 1; }
  button { display: flex; align-items: center; gap: 6px; min-width: 179px; margin-left: 4px; }
`;
const StatusUnits = styled.div`display: flex; gap: 12px; margin-left: -8px;`;
const Taskbar = styled.div`height: 4px; flex: none; background: #101010; padding-left: 48px; i { display: block; width: 288px; height: 4px; background: #303030; border: 1px solid #565656; border-bottom: 0; }`;

const messageFilters = [["Show Errors", "(0)"], ["Show Warnings", "(0)"], ["Show Info", "(0)"], ["Merge Messages"], ["Pop-up Messages"]];

export default function App() {
  return (
    <Window>
      <Global />
      <TitleBar>
        <QuickTools>
          <Icon name="app" /><i />
          <button aria-label="Save"><Icon name="save" /></button>
          <button aria-label="Customize toolbar"><Svg s={8} h={7} vb="0 0 8 7"><path d="M0 0h8v1.500H0zM0 3h8L4 7z" fill="#f1f1f1" /></Svg></button>
        </QuickTools>
        <ContextTab>Context</ContextTab>
        <Title>A : Steady-State Thermal - Mechanical [Ansys Mechanical Enterprise]</Title>
        <WindowButtons>
          <button aria-label="Minimize"><Svg s={10} vb="0 0 10 10"><path d="M0 6h9" {...st("#fff", 2)} /></Svg></button>
          <button aria-label="Restore"><Svg s={10} vb="0 0 10 10"><path d="M1 4h6v5H1zM3 3V1h6v5H8" {...st("#fff", 1.400)} /></Svg></button>
          <button aria-label="Close"><Svg s={11} vb="0 0 11 11"><path d="M1 1l9 9M10 1l-9 9" {...st("#fff", 2)} /></Svg></button>
        </WindowButtons>
      </TitleBar>
      <TabBar>
        <Tab $kind="file">File</Tab>
        <Tab $kind="active">Home</Tab>
        {["Mesh", "Display", "Selection", "Automation", "Add-ons", "Learning and Support"].map((t) => <Tab key={t}>{t}</Tab>)}
        <QuickLaunch placeholder="Quick Launch" aria-label="Quick Launch" />
        <TabTools>
          <button aria-label="Feedback"><Svg><path d="M1.500 3.500l11-2 2 11-11 2z" {...st("#fff", 1.300)} /><path d="M5 8l2.500 3L12 3" {...st(O, 1.700)} /></Svg></button>
          <button aria-label="Help"><Svg s={20} h={16} vb="0 0 20 16"><circle cx="7.500" cy="8" r="7.200" fill="#3d8fd1" /><path d="M5 6q0-2.500 2.500-2.500T10 6q0 1.500-2.500 2.500V10M7.500 11.500v1.500" {...st("#14325c", 1.800)} /><path d="M14 6h6l-3 3.500z" fill="#fff" /></Svg></button>
          <button aria-label="Collapse ribbon"><Svg s={13} h={10} vb="0 0 13 10"><path d="M1 8l5.500-5.500L12 8" {...st(O, 1.800)} /></Svg></button>
        </TabTools>
      </TabBar>
      <RibbonBar />
      <Body>
        <Left>
          <Panel $flex="1" $below={4}>
            <PanelHeader title="Outline" max />
            <OutlineBar>
              <Grip />
              <Picker $w={100} $h={23}><select aria-label="Filter by" defaultValue="Name"><option>Name</option></select><span><Caret /></span></Picker>
              <input placeholder="Search Outline" aria-label="Search Outline" />
              <button aria-label="Next"><Svg s={15} h={9} vb="0 0 15 9"><path d="M1 1l6.500 6L14 1" {...st(O, 1.800)} /></Svg></button>
              <button aria-label="Outline options"><Caret color="#f1f1f1" /></button>
            </OutlineBar>
            <Split>
              <Tree>
                {treeRows.map(([guides, status, icon, label, exp, style]) => (
                  <TreeRow key={label}>
                    {[...guides].map((k, i) => (
                      <Guide key={i} $k={k}>
                        <i /><i />
                        {exp && i === guides.length - 1 && <button aria-label={`Toggle ${label}`}><PlusMinus open={exp === "-"} /></button>}
                      </Guide>
                    ))}
                    <Svg s={10} h={14} vb="0 -2 10 14">{statusIcons[status]}</Svg>
                    <Svg s={14}>{nodeIcons[icon]}</Svg>
                    <TreeText $bold={style === "bold"} $sel={style === "sel"}>{label}</TreeText>
                  </TreeRow>
                ))}
              </Tree>
              <Scroll $before={63} $thumb={179} $after={0} />
            </Split>
          </Panel>
          <Panel>
            <PanelHeader title={'Details of "Mesh"'} max />
            <Split $flex="0 0 177px">
              <Clip>
                <DetailsTable>
                  <colgroup><col width="13" /><col width="101" /><col /></colgroup>
                  <tbody>
                    {detailRows.map(([exp, name, value]) => (
                      <tr key={name}>
                        <td>{exp && <button aria-label={`Toggle ${name}`}><PlusMinus open={exp === "-"} /></button>}</td>
                        {value
                          ? <><th scope="row">{name === "Element Size" ? <label><PlainCheck />{name}</label> : name}</th><td>{value}</td></>
                          : <th colSpan={2}>{name}</th>}
                      </tr>
                    ))}
                  </tbody>
                </DetailsTable>
              </Clip>
              <Scroll $before={0} $thumb={107} $after={36} />
            </Split>
          </Panel>
          <DockTabs><DockTab $on>Details</DockTab><DockTab>Section Planes</DockTab></DockTabs>
          <Annotations><button>Graphics Annotations</button><i /></Annotations>
        </Left>
        <Right>
          <ViewBar>
            <Grip />
            {renderTools(tools1)}
            <TextTool as="span" $w={40} $pad={4}>Select</TextTool>
            <TextTool $w={67} $pad={3}><Svg s={15}><path d="M0 0h8v8H0z" fill="#e8842c" /><g transform="translate(-1 -2) scale(1.300)"><Pointer x={5} y={4} /></g></Svg>Mode<Caret /></TextTool>
            {renderTools(tools2)}
            <TextTool $w={86} $pad={3}><Svg s={15}><path d="M0 0h16v16H0z" fill="#f5c04a" /><path d="M3.500 2.500h9v11h-9z" fill="#fff" stroke="#333" /><path d="M6 1h4v3H6z" fill="#333" /></Svg>Clipboard<Caret /></TextTool>
            <TextTool $w={58} $pad={6}>[ Empty ]</TextTool>
            <Bar />
            <TextTool $w={70} $pad={4}><Svg s={15}><path d="M1 4l7-3 7 3v8l-7 3-7-3zM1 4l7 3 7-3M8 7v8" {...st("#ddd", 1.200)} /><path d="M1 5l6 2.500V15l-6-3z" fill={c.green} /><circle cx="9" cy="4" r="2.500" fill="#e8842c" /></Svg>Extend<Caret /></TextTool>
            <Overflow aria-label="More tools"><Svg s={9} h={18} vb="0 0 9 18"><path d="M1 1l3.500 3L8 1M1 5l3.500 3L8 5" {...st("#bbb", 1.200)} /><path d="M1 13h7l-3.500 4z" fill="#fff" /></Svg></Overflow>
          </ViewBar>
          <Viewport>
            <Scene />
            <Brand>
              <svg width="111" height="36" viewBox="0 0 111 36" role="img" aria-label="Ansys">
                <path d="M1 27L12 0h7L8 27zM14 11L18 0h2l12 27h-9z" fill="#fff" />
                <text x="110" y="27" textAnchor="end" fontFamily="Open Sans, sans-serif" fontWeight="700" fontSize="35" fill="#fff">nsys</text>
              </svg>
              <p>2024 R2</p>
              <strong>STUDENT</strong>
            </Brand>
          </Viewport>
          <Panel $above={3}>
            <PanelHeader title="Messages" />
            <MsgBar>
              <Grip />
              {messageFilters.map(([name, count]) => (
                <CheckLabel key={name}><Check />{name}{count && <span>{count}</span>}</CheckLabel>
              ))}
              <button aria-label="Message options"><Caret color="#f1f1f1" /></button>
            </MsgBar>
            <MsgBody>
              <MsgTable>
                <colgroup><col width="50" /><col width="465" /><col width="305" /><col /></colgroup>
                <thead><tr><th aria-label="Severity" /><th>Text</th><th>Association</th><th>Timestamp</th></tr></thead>
              </MsgTable>
            </MsgBody>
          </Panel>
          <DockTabs><DockTab>Selection Information</DockTab><DockTab $on>Messages</DockTab></DockTabs>
          <Footroom />
        </Right>
      </Body>
      <Status>
        <span>Ready</span><span>Messages pane</span><span>No Selection</span>
        <button><Svg s={9} h={5} vb="0 0 9 5"><path d="M0 5h9L4.500 0z" fill="#fff" /></Svg>Metric (mm, kg, N, s, mV, mA)</button>
        <StatusUnits><span>Degrees</span><span>rad/s</span><span>Celsius</span></StatusUnits>
      </Status>
      <Taskbar><i /></Taskbar>
    </Window>
  );
}
